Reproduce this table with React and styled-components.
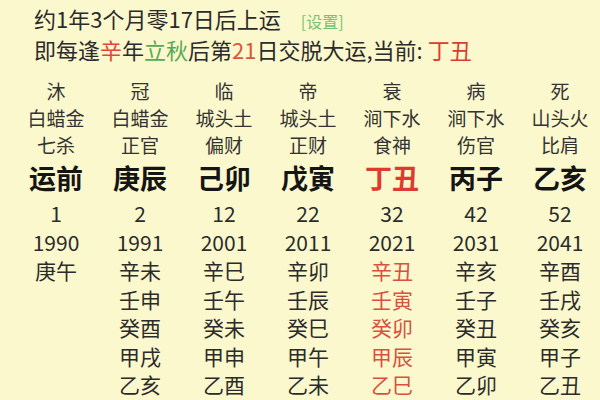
import styled, { createGlobalStyle } from 'styled-components';

const GlobalStyle = createGlobalStyle`
  html, body {
    margin: 0;
    padding: 0;
    background: #fcf8cd;
  }
  body {
    font-family: "Noto Sans CJK SC", "Noto Sans", sans-serif;
    color: #2b2b2b;
  }
`;

const Page = styled.div`
  width: 600px;
  height: 400px;
  overflow: hidden;
  background: #fcf8cd;
`;

const Header = styled.div`
  padding: 4px 0 0 34px;
  font-size: 22px;
  line-height: 28px;
  color: #2b2b2b;
  white-space: nowrap;
`;

const Line = styled.div``;

const SetLink = styled.span`
  font-size: 16px;
  color: #74c274;
  margin-left: 20px;
`;

const Tint = styled.span`
  color: ${({ $c }) => $c};
`;

const Grid = styled.div`
  display: grid;
  grid-template-columns: repeat(7, 84px);
  padding: 14px 0 0 14px;
`;

const Column = styled.div`
  display: flex;
  flex-direction: column;
  align-items: center;
`;

const Small = styled.div`
  font-size: 19px;
  line-height: 27px;
  height: 27px;
  color: #333;
`;

const Pillar = styled.div`
  font-size: 27px;
  font-weight: 700;
  line-height: 40px;
  height: 40px;
  color: ${({ $active }) => ($active ? '#dc3b2e' : '#151515')};
  margin-bottom: 1px;
`;

const Cell = styled.div`
  font-size: 21px;
  line-height: 28.5px;
  height: 28.5px;
  color: ${({ $active }) => ($active ? '#d9503f' : '#2b2b2b')};
`;

const columns = [
  { stage: '沐', nayin: '白蜡金', god: '七杀', pillar: '运前', age: '1', year: '1990', years: ['庚午'] },
  { stage: '冠', nayin: '白蜡金', god: '正官', pillar: '庚辰', age: '2', year: '1991', years: ['辛未', '壬申', '癸酉', '甲戌', '乙亥'] },
  { stage: '临', nayin: '城头土', god: '偏财', pillar: '己卯', age: '12', year: '2001', years: ['辛巳', '壬午', '癸未', '甲申', '乙酉'] },
  { stage: '帝', nayin: '城头土', god: '正财', pillar: '戊寅', age: '22', year: '2011', years: ['辛卯', '壬辰', '癸巳', '甲午', '乙未'] },
  { stage: '衰', nayin: '涧下水', god: '食神', pillar: '丁丑', age: '32', year: '2021', years: ['辛丑', '壬寅', '癸卯', '甲辰', '乙巳'], active: true },
  { stage: '病', nayin: '涧下水', god: '伤官', pillar: '丙子', age: '42', year: '2031', years: ['辛亥', '壬子', '癸丑', '甲寅', '乙卯'] },
  { stage: '死', nayin: '山头火', god: '比肩', pillar: '乙亥', age: '52', year: '2041', years: ['辛酉', '壬戌', '癸亥', '甲子', '乙丑'] },
];

export default function App() {
  return (
    <Page>
      <GlobalStyle />
      <Header>
        <Line>
          约1年3个月零17日后上运<SetLink>[设置]</SetLink>
        </Line>
        <Line>
          即每逢<Tint $c="#e0463a">辛</Tint>年<Tint $c="#55ab55">立秋</Tint>后第
          <Tint $c="#d9583c">21</Tint>日交脱大运,当前: <Tint $c="#dc3b2e">丁丑</Tint>
        </Line>
      </Header>
      <Grid>
        {columns.map((col) => (
          <Column key={col.age}>
            <Small>{col.stage}</Small>
            <Small>{col.nayin}</Small>
            <Small>{col.god}</Small>
            <Pillar $active={col.active}>{col.pillar}</Pillar>
            <Cell>{col.age}</Cell>
            <Cell>{col.year}</Cell>
            {col.years.map((y) => (
              <Cell key={y} $active={col.active}>
                {y}
              </Cell>
            ))}
          </Column>
        ))}
      </Grid>
    </Page>
  );
}
